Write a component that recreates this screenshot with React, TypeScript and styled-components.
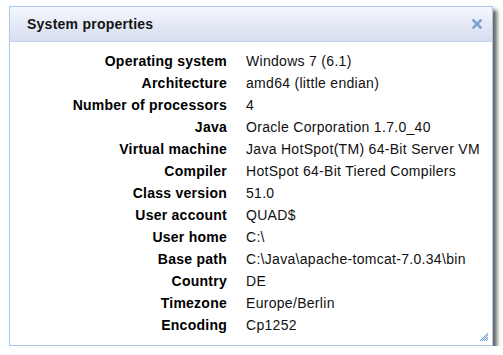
import React from "react";
import styled, { createGlobalStyle } from "styled-components";

const Global = createGlobalStyle`
	body {
		margin: 0;
		background: #ffffff;
		font-family: "Liberation Sans", Arial, sans-serif;
	}
`;

const properties: [string, string][] = [
	["Operating system", "Windows 7 (6.1)"],
	["Architecture", "amd64 (little endian)"],
	["Number of processors", "4"],
	["Java", "Oracle Corporation 1.7.0_40"],
	["Virtual machine", "Java HotSpot(TM) 64-Bit Server VM"],
	["Compiler", "HotSpot 64-Bit Tiered Compilers"],
	["Class version", "51.0"],
	["User account", "QUAD$"],
	["User home", "C:\\"],
	["Base path", "C:\\Java\\apache-tomcat-7.0.34\\bin"],
	["Country", "DE"],
	["Timezone", "Europe/Berlin"],
	["Encoding", "Cp1252"],
];

const Dialog = styled.div`
	position: relative;
	margin: 6px 0 0 9px;
	width: 482px;
	height: 338px;
	border: 1px solid #a9c9ee;
	background: #ffffff;
	box-shadow: 4px 4px 4px rgba(0, 0, 0, 0.62);
	display: flex;
	flex-direction: column;
`;

const TitleBar = styled.div`
	height: 34px;
	display: flex;
	align-items: center;
	justify-content: space-between;
	padding: 0 10px 0 17px;
	background: linear-gradient(to bottom, #f5f7fd, #d6ddef);
	border-bottom: 1px solid #c5d2ea;
`;

const Title = styled.span`
	font-size: 14px;
	font-weight: bold;
	letter-spacing: 0.25px;
	color: #141414;
`;

const CloseButton = styled.button`
	border: 0;
	padding: 0;
	background: none;
	width: 10px;
	height: 10px;
	display: flex;
	cursor: pointer;
`;

const Body = styled.div`
	flex: 1;
	padding-top: 8px;
	display: grid;
	grid-template-columns: 217px 1fr;
	column-gap: 19px;
	grid-auto-rows: 22px;
	align-content: start;
`;

const Label = styled.div`
	font-size: 14px;
	font-weight: bold;
	letter-spacing: 0.25px;
	color: #000000;
	text-align: right;
	line-height: 22px;
	white-space: nowrap;
`;

const Value = styled.div`
	font-size: 14px;
	letter-spacing: 0.3px;
	color: #111111;
	line-height: 22px;
	white-space: nowrap;
`;

const Grip = styled.svg`
	position: absolute;
	right: 4px;
	bottom: 4px;
`;

const gripDots: [number, number][] = [];
for (let y = 0; y < 8; y++) {
	for (let x = 7 - y; x < 8; x++) {
		if ((x + y) % 2 === 1) gripDots.push([x, y]);
	}
}

export default function App() {
	return (
		<>
			<Global />
			<Dialog>
				<TitleBar>
					<Title>System properties</Title>
					<CloseButton aria-label="Close">
						<svg width="10" height="10" viewBox="0 0 10 10">
							<path d="M1.5 1.5 L8.5 8.5 M8.5 1.5 L1.5 8.5" stroke="#7aa3cf" strokeWidth="2.6" strokeLinecap="square" />
						</svg>
					</CloseButton>
				</TitleBar>
				<Body>
					{properties.map(([label, value]) => (
						<React.Fragment key={label}>
							<Label>{label}</Label>
							<Value>{value}</Value>
						</React.Fragment>
					))}
				</Body>
				<Grip width="8" height="8" viewBox="0 0 8 8">
					{gripDots.map(([x, y]) => (
						<rect key={`${x}-${y}`} x={x} y={y} width="1" height="1" fill="#5b92d6" />
					))}
				</Grip>
			</Dialog>
		</>
	);
}
